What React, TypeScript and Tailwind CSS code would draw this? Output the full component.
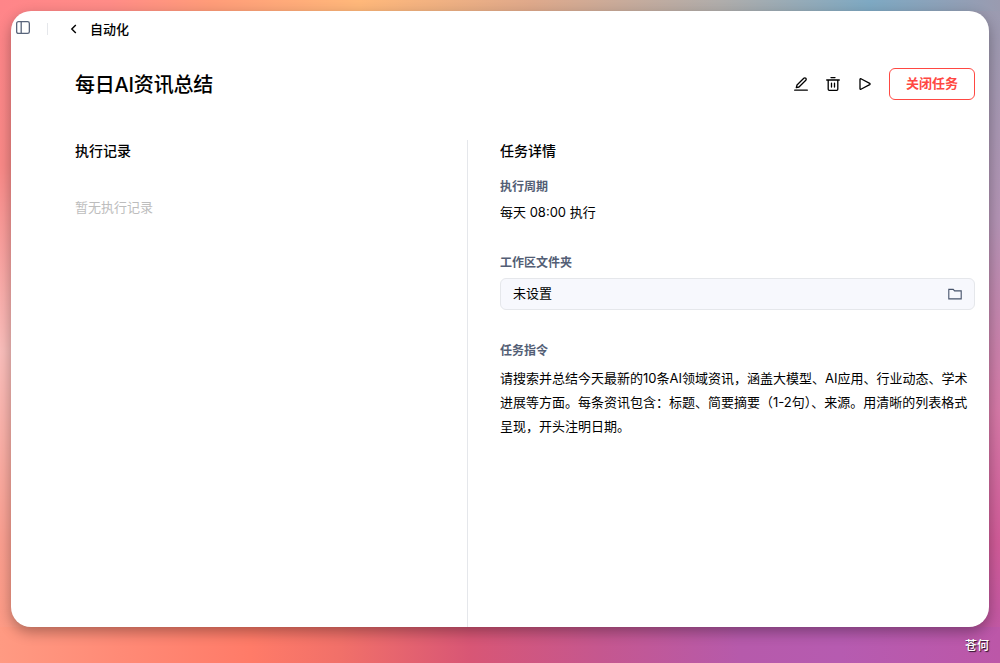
import type { ReactNode } from "react";

function Field({ label, className = "", children }: { label: string; className?: string; children: ReactNode }) {
  return (
    <div className={className}>
      <div className="text-xs leading-5 font-semibold text-[#535e75]">{label}</div>
      {children}
    </div>
  );
}

function IconButton({ label, children }: { label: string; children: ReactNode }) {
  return (
    <button aria-label={label} className="flex size-4 items-center justify-center">
      <svg width="16" height="16" viewBox="0 0 16 16" fill="none" stroke="currentColor" strokeWidth="1.3" strokeLinecap="round" strokeLinejoin="round">
        {children}
      </svg>
    </button>
  );
}

export default function App() {
  return (
    <div className="relative h-[663px] w-[1000px] overflow-hidden bg-[linear-gradient(90deg,#ff8589_0%,#ff8c87_11%,#ff9c79_21%,#ffb87a_36%,#dfa98b_53%,#b0adab_72%,#7ea9c3_87%,#9a9bb0_100%),linear-gradient(90deg,#ff9a82_0%,#ff8a76_12%,#ff7b68_25%,#f17069_34%,#d85675_47%,#c5578f_60%,#b65aab_74%,#b65bb0_84%,#bc57a8_100%),linear-gradient(180deg,#ff8589_0%,#fa8a88_25%,#fbbfbc_53%,#fb9f90_82%,#ff9a82_100%),linear-gradient(180deg,#9a9bb0_0%,#b494b5_33%,#d679a7_62%,#d15b98_82%,#bc57a8_100%)] bg-[length:100%_11px,100%_36px,50%_100%,50%_100%] bg-[position:top,bottom,left,right] bg-no-repeat p-[11px] font-[Inter,'Noto_Sans_CJK_SC',sans-serif] text-black">
      <div className="flex h-[616px] flex-col rounded-[20px] bg-white shadow-[0_5px_14px_rgba(0,0,0,0.32)]">
        {/* Top bar */}
        <header className="flex h-9 items-center pl-1">
          <svg width="16" height="16" viewBox="0 0 16 16" fill="none" stroke="#59657b" strokeWidth="1.3" className="-mt-0.5">
            <rect x="1.65" y="1.65" width="12.7" height="11.8" rx="1.8" />
            <path d="M6.2 1.7v11.7" />
          </svg>
          <div className="ml-4 h-3 w-px bg-gray-200" />
          <button className="ml-[18px] flex items-center gap-2 pt-px text-[13px] font-medium">
            <svg width="16" height="16" viewBox="0 0 16 16" fill="none" stroke="currentColor" strokeWidth="1.4" className="-mt-px">
              <path d="m9.8 4-4 4 4 4" />
            </svg>
            自动化
          </button>
        </header>

        <div className="flex items-center justify-between pt-[21px] pr-3.5 pl-16">
          <h1 className="pt-0.5 text-xl font-medium tracking-[-0.2px]">每日AI资讯总结</h1>
          <div className="flex items-center gap-4">
            <IconButton label="编辑">
              <path d="M3.3 11.7 4 9l6.8-6.8a1.35 1.35 0 0 1 2 2L6 11z" />
              <path d="M1.7 14.2h12.6" />
            </IconButton>
            <IconButton label="删除">
              <path d="M1.7 4h12.6M6 1.6h4M3.2 4v9.2c0 .7.4 1.1 1.1 1.1h7.4c.7 0 1.1-.4 1.1-1.1V4M6.5 7.2v3.8M9.5 7.2v3.8" />
            </IconButton>
            <IconButton label="运行">
              <path d="M3 3.3v9.4c0 .5.5.8.9.6l8.8-4.7c.5-.3.5-.9 0-1.2L3.9 2.7c-.4-.2-.9.1-.9.6z" />
            </IconButton>
            <button className="h-8 w-[86px] rounded-md border border-[#ff4842] text-[13px] font-semibold text-[#ff4842]">
              关闭任务
            </button>
          </div>
        </div>

        <main className="mt-10 flex flex-1">
          <section className="w-[456px] pl-16">
            <h2 className="-mt-px text-sm leading-6 font-medium">执行记录</h2>
            <p className="mt-8 text-[13px] leading-6 text-[#bdbdbd]">暂无执行记录</p>
          </section>

          <section className="flex-1 border-l border-gray-200 pr-3.5 pl-8">
            <h2 className="-mt-px text-sm leading-6 font-medium">任务详情</h2>
            <Field label="执行周期" className="mt-3.5">
              <p className="mt-[3px] text-[13px] leading-6">每天 08:00 执行</p>
            </Field>
            <Field label="工作区文件夹" className="mt-[29px]">
              <div className="mt-[5px] flex h-8 items-center justify-between rounded-md border border-gray-200 bg-[#f7f8fd] px-3 text-[13px]">
                未设置
                <svg width="14" height="14" viewBox="0 0 14 14" fill="none" stroke="#47536b" strokeWidth="1.1">
                  <path d="M.8 2.4h4.4l1.4 1.5h6.6v8H.8z" />
                </svg>
              </div>
            </Field>
            <Field label="任务指令" className="mt-[31px]">
              <p className="mt-[5px] text-[13px] leading-6">
                请搜索并总结今天最新的10条AI领域资讯，涵盖大模型、AI应用、行业动态、学术进展等方面。每条资讯包含：标题、简要摘要（1-2句）、来源。用清晰的列表格式呈现，开头注明日期。
              </p>
            </Field>
          </section>
        </main>
      </div>

      <span className="absolute right-[11px] bottom-[7px] text-xs leading-5 font-medium text-white [text-shadow:1px_1px_1px_rgba(0,0,0,0.8)]">
        苍何
      </span>
    </div>
  );
}
